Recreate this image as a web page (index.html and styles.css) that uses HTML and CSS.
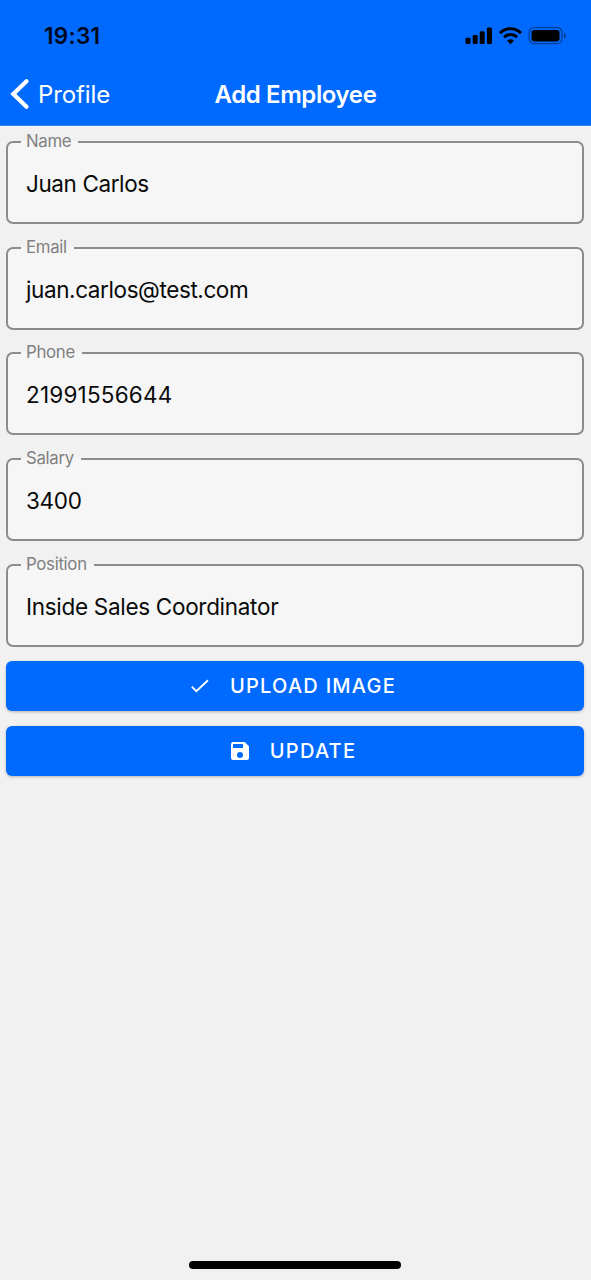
FILE: index.html
```html
<!DOCTYPE html>
<html lang="en">
<head>
<meta charset="utf-8">
<title>Add Employee</title>
<link rel="stylesheet" href="styles.css">
</head>
<body>
<header class="header">
  <div class="status">
    <span class="time">19:31</span>
    <svg class="status-icons" width="102" height="20" viewBox="0 0 102 20">
      <g>
        <rect x="1.5" y="11.8" width="5" height="6.2" rx="1.3"/>
        <rect x="8.7" y="9" width="5" height="9" rx="1.3"/>
        <rect x="15.7" y="5.2" width="5" height="12.8" rx="1.3"/>
        <rect x="22.9" y="1.5" width="5" height="16.5" rx="1.3"/>
      </g>
      <g fill="none" stroke="#000" stroke-width="3">
        <path d="M36 7.1a14.6 14.6 0 0 1 21 0"/>
        <path d="M40 11.2a9.2 9.2 0 0 1 13 0"/>
      </g>
      <path d="M46.5 18.2l-3.5-3.6a5 5 0 0 1 7 0z"/>
      <rect x="65.1" y="1.6" width="33" height="16" rx="5" fill="none" stroke="#000" stroke-opacity=".42" stroke-width="1.3"/>
      <rect x="67.5" y="4" width="28" height="11.4" rx="2.8"/>
      <path d="M100 7v5.4q2-.8 2-2.7T100 7z" opacity=".45"/>
    </svg>
  </div>
  <nav class="nav">
    <div class="back">
      <svg width="20" height="32" viewBox="0 0 20 32"><path d="M16.5 3.2L3.3 16l13.2 12.8" fill="none" stroke="#fff" stroke-width="4.2" stroke-linecap="round" stroke-linejoin="miter"/></svg>
      <span class="back-label">Profile</span>
    </div>
    <h1 class="title">Add Employee</h1>
  </nav>
</header>
<main class="form">
  <fieldset class="field"><legend>Name</legend><span class="value tight">Juan Carlos</span></fieldset>
  <fieldset class="field"><legend>Email</legend><span class="value tight">juan.carlos@test.com</span></fieldset>
  <fieldset class="field"><legend>Phone</legend><span class="value digits">21991556644</span></fieldset>
  <fieldset class="field"><legend>Salary</legend><span class="value">3400</span></fieldset>
  <fieldset class="field"><legend>Position</legend><span class="value">Inside Sales Coordinator</span></fieldset>
  <button class="button">
    <svg width="24" height="24" viewBox="0 0 24 24"><path d="M3.8 12.6l4.6 4.6L20 6.200" fill="none" stroke="#fff" stroke-width="1.9"/></svg>
    <span>UPLOAD IMAGE</span>
  </button>
  <button class="button">
    <svg width="24" height="24" viewBox="0 0 24 24"><path fill="#fff" fill-rule="evenodd" d="M16.7 3H5a2 2 0 0 0-2 2v14a2 2 0 0 0 2 2h14a2 2 0 0 0 2-2V7.300zM12 19a3 3 0 1 1 0-6 3 3 0 0 1 0 6zM5 5h10v4H5z"/></svg>
    <span>UPDATE</span>
  </button>
</main>
<div class="home-bar"></div>
</body>
</html>
```
FILE: styles.css
```css
* { box-sizing: border-box; }

body {
  margin: 0;
  height: 1280px;
  display: flex;
  flex-direction: column;
  background: #f1f1f1;
  font-family: Inter, "Liberation Sans", sans-serif;
  color: #0a0a0a;
}

.header {
  height: 126px;
  background: #006aff;
  border-bottom: 1px solid #3c83f0;
}

.status {
  height: 63px;
  padding: 8px 25px 0 44px;
  display: flex;
  justify-content: space-between;
  align-items: center;
}

.time { font-size: 22.5px; font-weight: 600; letter-spacing: 0.3px; color: #000820; }

.nav {
  height: 62px;
  display: grid;
  grid-template-columns: 1fr auto 1fr;
  align-items: center;
  color: #fff;
}

.back { display: flex; align-items: center; gap: 8px; padding-left: 10px; }
.back-label { font-size: 24px; letter-spacing: -0.1px; }
.title { margin: 0; font-size: 24px; font-weight: 600; letter-spacing: -0.4px; }

.form { flex: 1; padding: 7px 7px 0 6px; display: flex; flex-direction: column; }

.field {
  margin: 0 0 14.7px;
  padding: 0 0 0 13px;
  height: 91px;
  min-width: 0;
  flex: none;
  border: 2px solid #8c8c8c;
  border-radius: 7px;
  background: #f6f6f6;
}

.field legend {
  height: 18px;
  padding: 0 7px 1px 5px;
  font-size: 16.8px;
  line-height: 17px;
  letter-spacing: -0.3px;
  color: #808080;
}

.value {
  display: block;
  padding: 18px 0 0 5px;
  font-size: 22.5px;
  line-height: 30px;
  letter-spacing: -0.3px;
}

.tight { letter-spacing: -0.4px; }
.digits { letter-spacing: 0.2px; }

.button {
  height: 50px;
  flex: none;
  margin: 0 0 14.4px;
  padding: 0 6px 0 0;
  border: 0;
  border-radius: 6px;
  background: #006aff;
  box-shadow: 0 1px 3px rgba(0, 0, 0, 0.25);
  display: flex;
  align-items: center;
  justify-content: center;
  gap: 18px;
  color: #fff;
  font: 500 20px Inter, "Liberation Sans", sans-serif;
  letter-spacing: 1.25px;
}

.home-bar {
  width: 212px;
  height: 8px;
  margin: 0 0 11px 189px;
  border-radius: 4px;
  background: #000;
}
```
